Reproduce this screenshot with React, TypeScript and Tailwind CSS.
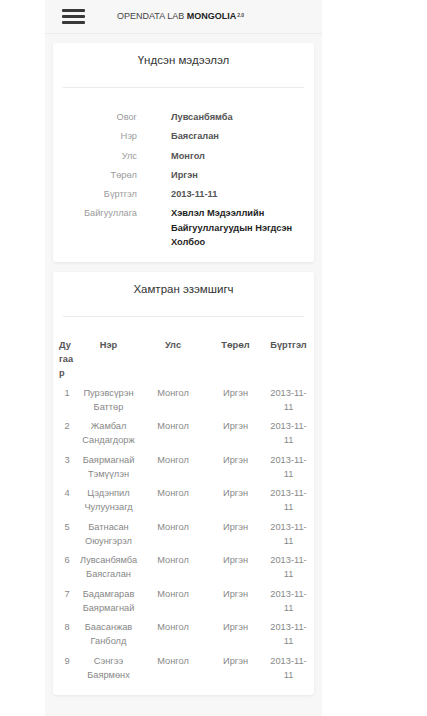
import React from 'react';

const info: { label: string; value: string[]; strong?: boolean }[] = [
  { label: 'Овог', value: ['Лувсанбямба'] },
  { label: 'Нэр', value: ['Баясгалан'] },
  { label: 'Улс', value: ['Монгол'] },
  { label: 'Төрөл', value: ['Иргэн'] },
  { label: 'Бүртгэл', value: ['2013-11-11'] },
  { label: 'Байгууллага', value: ['Хэвлэл Мэдээллийн', 'Байгууллагуудын Нэгдсэн', 'Холбоо'], strong: true },
];

const owners: [string, string][] = [
  ['Пурэвсүрэн', 'Баттөр'],
  ['Жамбал', 'Сандагдорж'],
  ['Баярмагнай', 'Тэмүүлэн'],
  ['Цэдэнпил', 'Чулуунзагд'],
  ['Батнасан', 'Оюунгэрэл'],
  ['Лувсанбямба', 'Баясгалан'],
  ['Бадамгарав', 'Баярмагнай'],
  ['Баасанжав', 'Ганболд'],
  ['Сэнгээ', 'Баярмөнх'],
];

// карт доторх гарчиг + зураас
function CardTitle({ children }: { children: React.ReactNode }) {
  return (
    <>
      <div className="text-center text-[11.5px] leading-[17px] text-[#333]">{children}</div>
      <div className="mx-[10px] mt-[18px] h-px bg-[#ebebeb]" />
    </>
  );
}

export default function App() {
  return (
    <div className="min-h-[716px] w-full bg-white" style={{ fontFamily: '"Liberation Sans", Arial, sans-serif' }}>
      <div className="ml-[45px] min-h-[716px] w-[277px] bg-[#f7f7f7]">
        {/* header */}
        <div className="flex h-[34px] items-center border-b border-[#ececec]">
          <div className="ml-[17px] flex w-[23px] flex-col gap-[3px]">
            <span className="block h-[3px] rounded-[1px] bg-[#383838]" />
            <span className="block h-[3px] rounded-[1px] bg-[#383838]" />
            <span className="block h-[3px] rounded-[1px] bg-[#383838]" />
          </div>
          <div className="ml-[32px] text-[9px] leading-none text-[#444]">
            OPENDATA LAB <span className="font-bold text-[#222]">MONGOLIA</span>
            <sup className="ml-px text-[5px] font-bold text-[#444]">2.0</sup>
          </div>
        </div>

        {/* үндсэн мэдээлэл */}
        <div className="mx-[8px] mt-[9px] rounded-[3px] bg-white pt-[9px] pb-[12px] shadow-[0_1px_3px_rgba(0,0,0,0.07)]">
          <CardTitle>Үндсэн мэдээлэл</CardTitle>
          <div className="mt-[22px] grid grid-cols-[84px_1fr] gap-x-[34px] gap-y-[4.8px] text-[9.25px] leading-[14.5px]">
            {info.map((row) => (
              <React.Fragment key={row.label}>
                <div className="text-right text-[#9b9b9b]">{row.label}</div>
                <div className={`font-bold ${row.strong ? 'text-[#1f1f1f]' : 'text-[#555]'}`}>
                  {row.value.map((v) => (
                    <div key={v}>{v}</div>
                  ))}
                </div>
              </React.Fragment>
            ))}
          </div>
        </div>

        {/* хамтран эзэмшигч */}
        <div className="mx-[8px] mt-[10px] rounded-[3px] bg-white pt-[9px] pb-[13px] shadow-[0_1px_3px_rgba(0,0,0,0.07)]">
          <CardTitle>Хамтран эзэмшигч</CardTitle>
          <div className="mt-[21px] pl-[6px] text-[9.25px] leading-[14px]">
            <div className="grid grid-cols-[16px_67px_62px_63px_43px] font-bold text-[#555]">
              <div className="text-left">
                <div>Ду</div>
                <div>гаа</div>
                <div>р</div>
              </div>
              <div className="text-center">Нэр</div>
              <div className="text-center">Улс</div>
              <div className="text-center">Төрөл</div>
              <div className="text-center">Бүртгэл</div>
            </div>
            <div className="mt-[6px] flex flex-col gap-[5.5px] text-[#888]">
              {owners.map((o, i) => (
                <div key={i} className="grid grid-cols-[16px_67px_62px_63px_43px] text-center">
                  <div>{i + 1}</div>
                  <div>
                    <div>{o[0]}</div>
                    <div>{o[1]}</div>
                  </div>
                  <div>Монгол</div>
                  <div>Иргэн</div>
                  <div>
                    <div>2013-11-</div>
                    <div>11</div>
                  </div>
                </div>
              ))}
            </div>
          </div>
        </div>
      </div>
    </div>
  );
}
